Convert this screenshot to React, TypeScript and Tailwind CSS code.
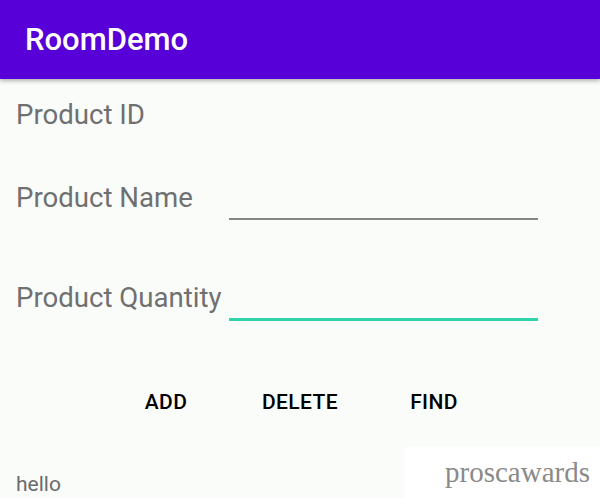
import React from "react";

export default function App() {
  return (
    <div className="relative w-[600px] h-[498px] overflow-hidden bg-[#fafcfa]" style={{ fontFamily: "Roboto, 'Noto Sans', sans-serif" }}>
      <div className="h-[79px] bg-[#5700d8] flex items-center pl-[25px] shadow-[0_2px_4px_rgba(0,0,0,0.3)] relative z-10">
        <span className="text-white text-[31px] font-medium leading-none">RoomDemo</span>
      </div>
      <div className="pl-[16px] flex flex-col">
        <div className="h-[72px] flex items-center text-[27.6px] leading-[32px] text-[#707070]">Product ID</div>
        <div className="flex items-end h-[77px]">
          <div className="w-[213px] text-[27.6px] leading-[32px] text-[#707070] pb-[14px] whitespace-nowrap">Product Name</div>
          <div className="w-[309px] h-[2px] bg-[#858585] mb-[8px]"></div>
        </div>
        <div className="flex items-end h-[98px]">
          <div className="w-[213px] text-[27.6px] leading-[32px] text-[#707070] pb-[12px] whitespace-nowrap">Product Quantity</div>
          <div className="w-[309px] h-[3px] bg-[#2fd4ab] mb-[5px]"></div>
        </div>
      </div>
      <div className="flex justify-center mt-[66px]">
        <button className="w-[134px] text-[21px] font-medium tracking-[0.4px] text-black leading-none">ADD</button>
        <button className="w-[134px] text-[21px] font-medium tracking-[0.4px] text-black leading-none">DELETE</button>
        <button className="w-[134px] text-[21px] font-medium tracking-[0.4px] text-black leading-none">FIND</button>
      </div>
      <div className="pl-[16px] mt-[61px] text-[21px] text-[#6b6b6b] leading-none">hello</div>
      <div className="absolute right-0 bottom-0 w-[195px] h-[51px] bg-white flex items-center justify-end pr-[10px]">
        <span className="text-[29px] text-[#8a8a8a]" style={{ fontFamily: "'Liberation Serif', serif" }}>proscawards</span>
      </div>
    </div>
  );
}
